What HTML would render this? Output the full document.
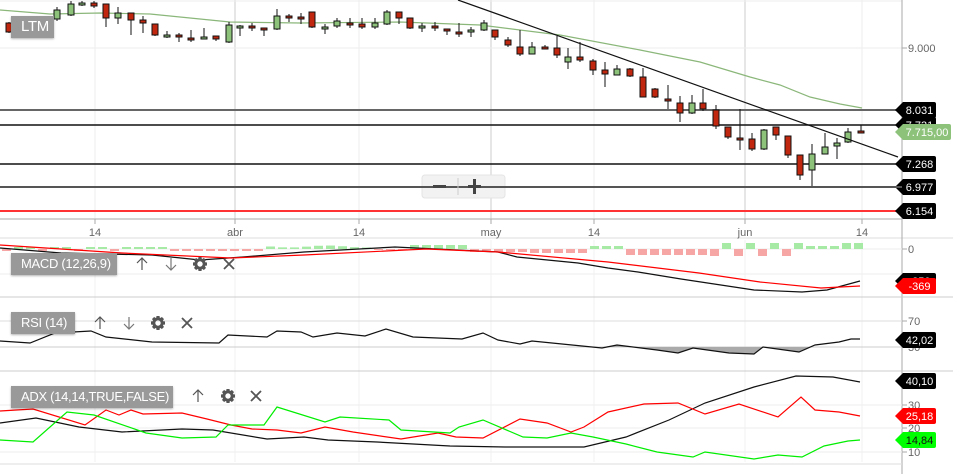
<!DOCTYPE html>
<html><head><meta charset="utf-8"><style>
html,body{margin:0;padding:0;background:#fff;width:953px;height:474px;overflow:hidden}
svg{display:block;font-family:"Liberation Sans",sans-serif}
.lbl{position:absolute;background:#999;color:#fff;font:13px "Liberation Sans",sans-serif;letter-spacing:-0.3px;white-space:nowrap;overflow:hidden;box-shadow:0 1px 2px rgba(0,0,0,.3);line-height:22px;padding:0 0 0 10px;box-sizing:border-box}
</style></head><body>
<div style="position:relative;width:953px;height:474px">
<svg id="s" width="953" height="474" viewBox="0 0 953 474"></svg>
<div class="lbl" style="left:11px;top:16px;width:43px;height:22px;font-size:15px">LTM</div>
<div class="lbl" style="left:11px;top:253px;width:106px">MACD (12,26,9)</div>
<div class="lbl" style="left:11px;top:312px;width:64px">RSI (14)</div>
<div class="lbl" style="left:11px;top:386px;width:162px">ADX (14,14,TRUE,FALSE)</div>
</div>
<script>
const s=document.getElementById('s');let h='';
const L=(x1,y1,x2,y2,c,w)=>h+=`<line x1="${x1}" y1="${y1}" x2="${x2}" y2="${y2}" stroke="${c}" stroke-width="${w||1}"/>`;
const P=(pts,c,w)=>h+=`<polyline points="${pts.map(p=>p.join(',')).join(' ')}" fill="none" stroke="${c}" stroke-width="${w||1}"/>`;
const T=(x,y,t,c,a,sz)=>h+=`<text x="${x}" y="${y}" fill="${c}" font-size="${sz||11}" text-anchor="${a||'start'}">${t}</text>`;
[95,235,359,491,594,745,862].forEach(x=>{L(x,0,x,219,x==235||x==491||x==745?'#ccc':'#eee');L(x,240,x,462,'#f2f2f2')});
L(0,48,902,48,'#eee');L(0,1,902,1,'#eee');
L(0,219,902,219,'#aaa');L(0,238,953,238,'#ddd');
[95,235,359,491,594,745,862].forEach(x=>L(x,219,x,224,'#aaa'));
[[95,'14'],[235,'abr'],[359,'14'],[491,'may'],[594,'14'],[745,'jun'],[862,'14']].forEach(a=>T(a[0],236,a[1],'#666','middle'));
L(902,0,902,474,'#aaa');L(902,48,907,48,'#aaa');T(908,52,'9.000','#666');
L(0,110,902,110,'#666',2);L(0,125,902,125,'#111',1.5);L(0,164,902,164,'#111',1.5);L(0,187,902,187,'#555',2);L(0,211,902,211,'#f33',2);
P([[0,10],[50,14],[100,13],[150,14],[230,22],[300,23],[400,22],[480,25],[560,35],[640,50],[700,62],[750,77],[780,85],[810,97],[840,104],[862,108]],'#8bb77a',1.2);
const C=[[9,'r',23,32,22,33],[57,'g',10,19,7,21],[71,'g',4,15,1,16],[82,'g',3,5,1,6],[94,'r',3,6,1,8],[106,'r',4,18,4,27],[118,'g',13,18,7,24],[131,'r',13,20,13,35],[143,'r',20,23,16,33],[155,'r',24,35,24,36],[167,'g',35,37,31,38],[179,'r',35,37,33,42],[191,'r',38,40,30,42],[204,'g',37,39,28,39],[216,'r',36,39,36,41],[229,'g',25,42,22,43],[240,'g',26,28,25,36],[252,'r',26,28,23,31],[264,'r',28,30,28,36],[277,'g',16,29,9,30],[289,'r',16,18,14,22],[301,'r',17,19,13,24],[312,'r',12,27,12,28],[325,'g',27,29,24,34],[337,'g',21,26,18,28],[350,'r',23,25,18,28],[362,'r',24,27,18,29],[375,'g',23,27,18,29],[387,'g',12,24,10,25],[399,'r',12,18,12,24],[410,'r',18,28,18,29],[422,'g',26,28,23,32],[435,'r',26,28,22,31],[447,'r',29,31,29,35],[459,'r',32,34,23,37],[471,'g',30,32,27,37],[484,'g',23,30,20,31],[495,'r',30,37,30,40],[508,'r',40,45,37,47],[520,'r',47,54,30,56],[532,'g',47,54,42,54],[545,'r',47,49,45,49],[557,'r',48,55,36,58],[568,'g',57,62,48,69],[580,'r',57,60,42,62],[593,'r',61,70,59,75],[605,'r',70,74,62,87],[617,'g',69,75,65,75],[630,'r',69,76,68,77],[643,'r',77,97,68,93],[655,'r',89,97,88,98],[668,'r',99,101,85,109],[680,'r',103,113,96,122],[692,'g',103,113,95,114],[703,'r',103,109,89,111],[716,'r',110,126,105,129],[728,'r',127,137,127,139],[740,'r',138,140,109,150],[752,'r',139,149,133,151],[764,'g',130,149,129,150],[776,'r',127,135,127,140],[788,'r',136,155,136,158],[800,'r',155,175,155,180],[812,'g',154,170,144,187],[825,'g',147,154,133,154],[837,'g',143,146,138,159],[848,'g',132,142,128,143],[861,'r',131,133,125,133]];
C.forEach(c=>{L(c[0],c[4],c[0],c[5],'#111');h+=`<rect x="${c[0]-3}" y="${c[2]}" width="6" height="${Math.max(c[3]-c[2],2)}" fill="${c[1]=='r'?'#c1270e':'#8cc27a'}" stroke="#111" stroke-width="1"/>`});
L(458,0,898,157,'#111',1.2);
const tag=(y,t,bg,fg,w)=>{w=w||41;h+=`<path d="M895 ${y} L903 ${y-8} H${895+w-2} a2 2 0 0 1 2 2 V${y+6} a2 2 0 0 1 -2 2 H903 Z" fill="${bg}"/>`;T(903+(w-8)/2,y+4,t,fg,'middle',11)};
tag(110,'8.031','#000','#fff');tag(125,'7.731','#000','#fff');tag(132,'7.715,00','#8cc27a','#fff',56);tag(164,'7.268','#000','#fff');tag(187,'6.977','#000','#fff');tag(211,'6.154','#000','#fff');
h+=`<rect x="422" y="175" width="83" height="23" rx="3" fill="#f2f2f2" stroke="#e4e4e4"/>`;L(0,187,902,187,'#555',2);
h+=`<rect x="433" y="185" width="13" height="3" fill="#444"/><rect x="468" y="185" width="13" height="3" fill="#444"/><rect x="473" y="179" width="3" height="15" fill="#444"/>`;L(458,178,458,195,'#ccc');
L(0,249,902,249,'#eee');L(0,274,902,274,'#eee');L(902,249,907,249,'#aaa');T(908,253,'0','#666');
for(let i=0;i<72;i++){const x=i*12+2;let v;
 if(x<140)v=i%3?2:-2; else if(x<170)v=2; else if(x<260)v=-2;else if(x<365)v=2.5+Math.sin(i);else if(x<400)v=-1;else if(x<470)v=4;else if(x<590)v=-4;else if(x<620)v=3;else if(x<700)v=-6;else if(x<770)v=-6;else if(x<840)v=3;else v=6;
 if(x>460&&x<520)v=v>0?v:-3; if(x>700&&x<800)v=i%2?-7:6;
 h+=`<rect x="${x}" y="${v>0?249-v:249}" width="9" height="${Math.abs(v)}" fill="${v>0?'#a6eaa6':'#f7a6a6'}"/>`;}
P([[0,248],[61,253],[152,255],[200,260],[243,257],[304,252],[395,247],[498,252],[517,257],[578,263],[608,268],[638,272],[681,279],[754,290],[802,292],[827,290],[860,281]],'#111',1.2);
P([[0,245],[122,253],[231,258],[304,255],[426,249],[498,252],[608,262],[699,273],[760,282],[821,288],[860,286]],'#f00',1.2);
tag(281,'-250','#000','#fff');tag(286,'-369','#f00','#fff');
L(0,297,953,297,'#ccc');
L(0,321,902,321,'#ddd');L(0,347,902,347,'#ccc');L(902,321,907,321,'#aaa');T(908,325,'70','#666');T(908,351,'30','#666');
const R=[[0,341],[30,343],[55,333],[91,331],[106,337],[152,342],[219,343],[228,335],[267,337],[277,331],[301,332],[313,337],[337,333],[365,336],[386,329],[413,337],[462,339],[483,333],[498,340],[520,344],[532,341],[562,344],[602,348],[617,345],[657,350],[678,353],[693,348],[729,353],[754,354],[763,347],[799,352],[815,345],[839,342],[851,339],[860,339]];
h+=`<path d="M602 347 L617 345 L657 350 L678 353 L693 348 L729 353 L754 354 L763 347 L799 352 L811 347 Z" fill="#aaa"/>`;
P(R,'#111',1.2);tag(340,'42,02','#000','#fff');
L(0,371,953,371,'#ccc');
[405,428,452].forEach((y,i)=>{L(0,y,902,y,'#eee');L(902,y,907,y,'#aaa');T(908,y+4,['30','20','10'][i],'#666')});
P([[0,423],[36,418],[79,427],[122,432],[182,429],[213,430],[267,439],[304,437],[328,440],[377,442],[450,446],[505,447],[584,447],[626,437],[669,420],[705,403],[754,387],[796,376],[833,377],[860,382]],'#111',1.2);
P([[0,411],[33,409],[85,425],[106,410],[119,415],[131,410],[143,414],[182,413],[207,419],[231,425],[252,429],[277,430],[301,433],[325,427],[353,432],[401,439],[438,433],[456,437],[483,438],[520,419],[547,423],[571,432],[584,427],[608,412],[644,404],[678,403],[705,414],[739,404],[778,417],[801,397],[815,410],[839,412],[860,416]],'#f00',1.2);
P([[0,440],[33,442],[67,412],[94,415],[146,433],[182,438],[216,437],[228,425],[264,425],[277,407],[325,422],[340,417],[389,420],[401,430],[450,433],[459,427],[483,420],[523,437],[547,438],[571,433],[593,437],[626,444],[657,452],[693,457],[705,452],[754,459],[778,455],[802,457],[824,446],[848,441],[860,440]],'#0e0',1.2);
tag(381,'40,10','#000','#fff');tag(416,'25,18','#f00','#fff');tag(440,'14,84','#0f0','#111');
L(0,464,902,464,'#ddd');
const up=(x,y,c)=>h+=`<path d="M${x} ${y+6}V${y-6}M${x-5} ${y-1}L${x} ${y-6}L${x+5} ${y-1}" fill="none" stroke="${c||'#555'}" stroke-width="1.2"/>`;
const dn=(x,y)=>h+=`<path d="M${x} ${y-6}V${y+6}M${x-5} ${y+1}L${x} ${y+6}L${x+5} ${y+1}" fill="none" stroke="#777" stroke-width="1.2"/>`;
const gear=(x,y)=>{for(let i=0;i<8;i++){h+=`<rect x="${x-1.6}" y="${y-7}" width="3.2" height="4" fill="#555" transform="rotate(${i*45} ${x} ${y})"/>`}h+=`<circle cx="${x}" cy="${y}" r="4.2" fill="none" stroke="#555" stroke-width="3"/>`};
const X=(x,y)=>h+=`<path d="M${x-5} ${y-5}L${x+5} ${y+5}M${x+5} ${y-5}L${x-5} ${y+5}" stroke="#555" stroke-width="1.8"/>`;
up(142,264);dn(171,264);gear(200,264);X(229,264);
up(100,323);dn(129,323);gear(158,323);X(187,323);
up(198,396);gear(228,396);X(256,396);
s.innerHTML=h;
</script>
</body></html>
